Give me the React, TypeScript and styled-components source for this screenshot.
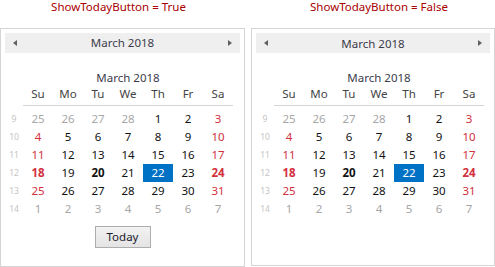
import React from 'react';
import styled, {createGlobalStyle} from 'styled-components';

const GlobalStyle = createGlobalStyle`
  body {
    margin: 0;
    background: #ffffff;
    font-family: "Noto Sans", "Open Sans", sans-serif;
  }
`;

const Page = styled.div`
  display: flex;
  gap: 6px;
  width: 495px;
  height: 267px;
  overflow: hidden;
`;

const Column = styled.div<{$width: number}>`
  display: flex;
  flex-direction: column;
  width: ${p => p.$width}px;
`;

const Caption = styled.div<{$shift: number}>`
  height: 28px;
  line-height: 13px;
  font-size: 11.5px;
  color: #a80000;
  text-align: center;
  transform: translateX(${p => p.$shift}px);
  box-sizing: border-box;
`;

const Panel = styled.div<{$height: number}>`
  box-sizing: border-box;
  height: ${p => p.$height}px;
  border: 1px solid #d5d5d5;
  padding: 4px;
  display: flex;
  flex-direction: column;
`;

const NavBar = styled.div`
  height: 20px;
  background: #efefef;
  display: flex;
  align-items: center;
  justify-content: space-between;
  padding: 0 8px;
  font-size: 11.5px;
  color: #3c3c4c;
`;

const Arrow = styled.span<{$dir: 'left' | 'right'}>`
  width: 0;
  height: 0;
  border-top: 3.5px solid transparent;
  border-bottom: 3.5px solid transparent;
  ${p =>
    p.$dir === 'left'
      ? 'border-right: 4px solid #606060;'
      : 'border-left: 4px solid #606060;'}
`;

const MonthTitle = styled.div`
  margin-top: 16px;
  height: 17px;
  line-height: 17px;
  padding-left: 18px;
  width: 210px;
  text-align: center;
  font-size: 11.5px;
  color: #3c3c4c;
`;

const Grid = styled.div`
  display: grid;
  grid-template-columns: 18px repeat(7, 30px);
  grid-template-rows: 24px;
  grid-auto-rows: 18px;
  font-size: 11.5px;
`;

const HeadCell = styled.div`
  box-sizing: border-box;
  height: 20px;
  line-height: 16px;
  padding-bottom: 3px;
  text-align: center;
  color: #444444;
  border-bottom: 1px solid #d5d5d5;
`;

const Blank = styled.div``;

const WeekNum = styled.div`
  font-size: 8.5px;
  color: #c4c4c4;
  line-height: 18px;
  text-align: center;
`;

type Kind = 'other' | 'normal' | 'weekend';

const Day = styled.div<{$kind: Kind; $bold?: boolean; $selected?: boolean}>`
  text-align: center;
  line-height: 18px;
  font-weight: ${p => (p.$bold ? 700 : 400)};
  color: ${p =>
    p.$selected
      ? '#ffffff'
      : p.$kind === 'other'
      ? '#a6a6a6'
      : p.$kind === 'weekend'
      ? '#d2303c'
      : '#111111'};
  background: ${p => (p.$selected ? '#0072c6' : 'transparent')};
`;

const Footer = styled.div`
  display: flex;
  justify-content: center;
  margin-top: 8px;
`;

const TodayButton = styled.button`
  width: 56px;
  height: 22px;
  padding: 0;
  border: 1px solid #adadad;
  background: linear-gradient(#f2f2f2, #e4e4e4);
  font-family: inherit;
  font-size: 11.5px;
  color: #1a1a2a;
`;

const heads = ['Su', 'Mo', 'Tu', 'We', 'Th', 'Fr', 'Sa'];

const weeks: {n: number; days: number[]}[] = [
  {n: 9, days: [25, 26, 27, 28, 1, 2, 3]},
  {n: 10, days: [4, 5, 6, 7, 8, 9, 10]},
  {n: 11, days: [11, 12, 13, 14, 15, 16, 17]},
  {n: 12, days: [18, 19, 20, 21, 22, 23, 24]},
  {n: 13, days: [25, 26, 27, 28, 29, 30, 31]},
  {n: 14, days: [1, 2, 3, 4, 5, 6, 7]},
];

function Calendar({showToday, height}: {showToday: boolean; height: number}) {
  return (
    <Panel $height={height}>
      <NavBar>
        <Arrow $dir="left" />
        <span>March 2018</span>
        <Arrow $dir="right" />
      </NavBar>
      <MonthTitle>March 2018</MonthTitle>
      <Grid>
        <Blank />
        {heads.map(h => (
          <HeadCell key={h}>{h}</HeadCell>
        ))}
        {weeks.map((w, wi) => (
          <React.Fragment key={w.n}>
            <WeekNum>{w.n}</WeekNum>
            {w.days.map((d, di) => {
              const other = (wi === 0 && d > 20) || wi === 5;
              const kind: Kind = other ? 'other' : di === 0 || di === 6 ? 'weekend' : 'normal';
              const bold = wi === 3 && (di === 0 || di === 2 || di === 6);
              return (
                <Day key={di} $kind={kind} $bold={bold} $selected={wi === 3 && di === 4}>
                  {d}
                </Day>
              );
            })}
          </React.Fragment>
        ))}
      </Grid>
      {showToday && (
        <Footer>
          <TodayButton>Today</TodayButton>
        </Footer>
      )}
    </Panel>
  );
}

export default function App() {
  return (
    <>
      <GlobalStyle />
      <Page>
        <Column $width={245}>
          <Caption $shift={-4}>ShowTodayButton = True</Caption>
          <Calendar showToday height={240} />
        </Column>
        <Column $width={244}>
          <Caption $shift={6}>ShowTodayButton = False</Caption>
          <Calendar showToday={false} height={238} />
        </Column>
      </Page>
    </>
  );
}
